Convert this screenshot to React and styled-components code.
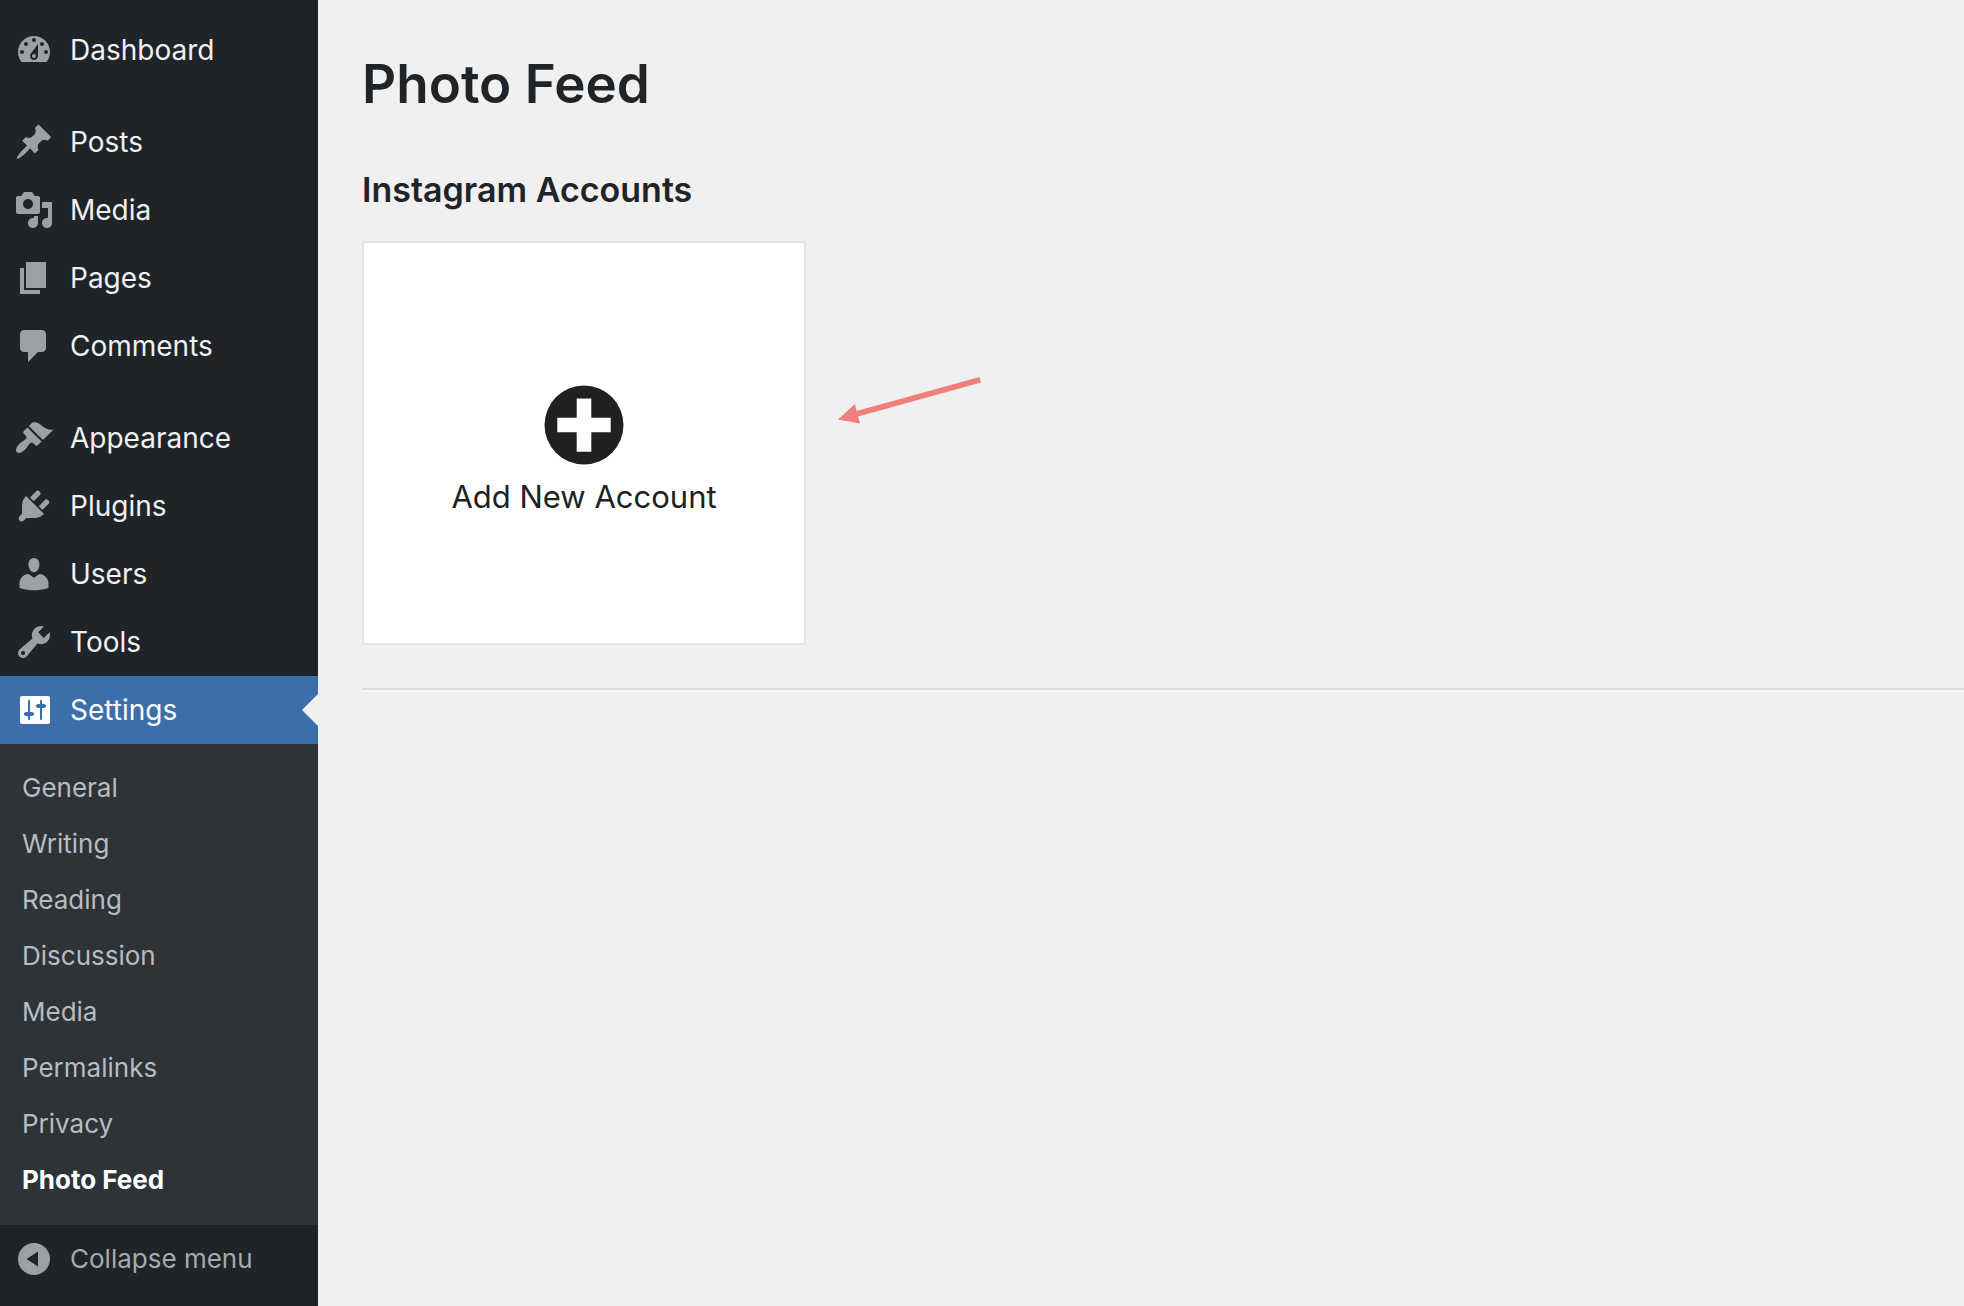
import React from "react";
import styled, { createGlobalStyle, css } from "styled-components";

const color = {
  page: "#f0f0f0",
  sidebar: "#1f2428",
  submenu: "#2e3338",
  active: "#3c6eab",
  icon: "#9ca1a6",
  menuText: "#f0f0f1",
  subText: "#b8bcc0",
  muted: "#a7aaad",
  heading: "#1f2428",
  ink: "#212121",
  arrow: "#ee7f7b",
};

const GlobalStyle = createGlobalStyle`
  *, *::before, *::after { box-sizing: border-box; }
  body {
    margin: 0;
    background: ${color.page};
    font-family: Inter, "Liberation Sans", sans-serif;
  }
`;

const Layout = styled.div`
  display: flex;
  align-items: stretch;
  min-height: 100vh;
`;

const Sidebar = styled.nav`
  flex: 0 0 318px;
  padding-top: 16px;
  background: ${color.sidebar};
`;

const MenuList = styled.ul`
  margin: 0;
  padding: 0;
  list-style: none;
`;

const MenuItem = styled.li`
  margin-top: ${(p) => (p.$separated ? "24px" : "0")};
`;

const rowStyle = css`
  position: relative;
  display: flex;
  align-items: center;
  gap: 16px;
  width: 100%;
  height: 68px;
  padding: 0 14px;
  text-decoration: none;
`;

const MenuLink = styled.a`
  ${rowStyle}
  font-size: 28px;
  line-height: 36px;
  color: ${(p) => (p.$active ? "#fff" : color.menuText)};
  background: ${(p) => (p.$active ? color.active : "transparent")};

  ${(p) =>
    p.$active &&
    css`
      &::after {
        content: "";
        position: absolute;
        top: 50%;
        right: 0;
        margin-top: -16px;
        border: 16px solid transparent;
        border-left-width: 0;
        border-right-color: ${color.page};
      }
    `}
`;

const MenuIcon = styled.svg`
  flex: none;
  width: 40px;
  height: 40px;
  fill: ${(p) => (p.$active ? "#fff" : color.icon)};
`;

const SubMenu = styled.ul`
  margin: 0;
  padding: 16px 0 17px;
  list-style: none;
  background: ${color.submenu};
`;

const SubLink = styled.a`
  display: block;
  padding: 10px 22px;
  font-size: 26px;
  line-height: 36px;
  font-weight: ${(p) => (p.$current ? 700 : 400)};
  color: ${(p) => (p.$current ? "#fff" : color.subText)};
  text-decoration: none;
`;

const CollapseButton = styled.button`
  ${rowStyle}
  border: 0;
  background: none;
  font: inherit;
  font-size: 26px;
  line-height: 36px;
  text-align: left;
  color: ${color.muted};
  cursor: pointer;
`;

const Main = styled.main`
  flex: 1;
  min-width: 0;
  padding: 48px 0 40px 44px;
`;

const PageTitle = styled.h1`
  margin: 0;
  font-size: 53px;
  line-height: 72px;
  font-weight: 600;
  color: ${color.heading};
`;

const SectionTitle = styled.h2`
  margin: 46px 0 27px;
  font-size: 34px;
  line-height: 48px;
  font-weight: 600;
  color: ${color.heading};
`;

const Accounts = styled.div`
  display: flex;
  align-items: flex-start;
  gap: 32px;
`;

const AddCard = styled.button`
  display: flex;
  flex-direction: column;
  align-items: center;
  justify-content: center;
  gap: 12px;
  width: 444px;
  height: 404px;
  padding: 16px 0 0;
  border: 2px solid #e5e5e5;
  background: #fff;
  font: inherit;
  font-size: 31px;
  line-height: 40px;
  color: ${color.ink};
  cursor: pointer;
`;

const PlusIcon = styled.svg`
  width: 80px;
  height: 80px;
  fill: ${color.ink};
`;

const Pointer = styled.svg`
  width: 146px;
  height: 48px;
  margin-top: 136px;
  fill: ${color.arrow};
`;

const Divider = styled.hr`
  margin: 43px 0 0;
  border: 0;
  border-top: 2px solid #dcdcde;
  border-bottom: 2px solid #f6f7f7;
`;

const menu = [
  {
    label: "Dashboard",
    path: "M3.76 16h12.48c1.1-1.37 1.76-3.11 1.76-5 0-4.42-3.58-8-8-8s-8 3.58-8 8c0 1.89.66 3.63 1.76 5zM10 4c.55 0 1 .45 1 1s-.45 1-1 1-1-.45-1-1 .45-1 1-1zM6 6c.55 0 1 .45 1 1s-.45 1-1 1-1-.45-1-1 .45-1 1-1zm8 0c.55 0 1 .45 1 1s-.45 1-1 1-1-.45-1-1 .45-1 1-1zm-5.37 5.55L12 7v6c0 1.1-.9 2-2 2s-2-.9-2-2c0-.57.24-1.08.63-1.45zM4 10c.55 0 1 .45 1 1s-.45 1-1 1-1-.45-1-1 .45-1 1-1zm12 0c.55 0 1 .45 1 1s-.45 1-1 1-1-.45-1-1 .45-1 1-1zm-5 3c0-.55-.45-1-1-1s-1 .45-1 1 .45 1 1 1 1-.45 1-1z",
  },
  {
    label: "Posts",
    separated: true,
    path: "M10.44 3.02l1.82-1.82 6.36 6.35-1.83 1.82c-1.05-.68-2.48-.57-3.41.36l-.75.75c-.92.93-1.04 2.35-.35 3.41l-1.83 1.82-2.41-2.41-2.8 2.79c-.42.42-3.38 2.71-3.8 2.29s1.86-3.39 2.28-3.81l2.79-2.79L4.1 9.36l1.83-1.82c1.05.69 2.48.57 3.4-.36l.75-.75c.93-.92 1.05-2.35.36-3.41z",
  },
  {
    label: "Media",
    path: "M13 11V4c0-.55-.45-1-1-1h-1.67L9 1H5L3.67 3H2c-.55 0-1 .45-1 1v7c0 .55.45 1 1 1h10c.55 0 1-.45 1-1zM7 4.5c1.38 0 2.5 1.12 2.5 2.5S8.38 9.5 7 9.5 4.5 8.38 4.5 7 5.62 4.5 7 4.5zM14 6h5v10.5c0 1.38-1.12 2.5-2.5 2.5S14 17.88 14 16.5s1.12-2.5 2.5-2.5c.17 0 .34.02.5.05V9h-3V6zm-4 8.05V13h2v3.5c0 1.38-1.12 2.5-2.5 2.5S7 17.88 7 16.5 8.12 14 9.5 14c.17 0 .34.02.5.05z",
  },
  { label: "Pages", path: "M6 15V2h10v13H6zm-1 1h8v2H3V5h2v11z" },
  {
    label: "Comments",
    path: "M5 2h9c1.1 0 2 .9 2 2v7c0 1.1-.9 2-2 2h-2l-5 5v-5H5c-1.1 0-2-.9-2-2V4c0-1.1.9-2 2-2z",
  },
  {
    label: "Appearance",
    separated: true,
    path: "M14.48 11.06L7.41 3.99l1.5-1.5c.5-.56 2.3-.47 3.51.32 1.21.8 1.43 1.28 2.91 2.1 1.18.64 2.45 1.26 4.45.85zm-.71.71L6.7 4.7 4.93 6.47c-.39.39-.39 1.02 0 1.41l1.06 1.06c.39.39.39 1.03 0 1.42-.6.6-1.43 1.11-2.21 1.69-.35.26-.7.53-1.01.84C1.43 14.23.4 16.08 1.4 17.07c.99 1 2.84-.03 4.18-1.36.31-.31.58-.66.85-1.02.57-.78 1.08-1.61 1.69-2.21.39-.39 1.02-.39 1.41 0l1.06 1.06c.39.39 1.02.39 1.41 0z",
  },
  {
    label: "Plugins",
    path: "M13.11 4.36L9.87 7.6 8 5.73l3.24-3.24c.35-.34 1.05-.2 1.56.32.52.51.66 1.21.31 1.55zm-8 1.77l.91-1.12 9.01 9.01-1.19.84c-.71.71-2.63 1.16-3.82 1.16H6.14L4.9 17.26c-.59.59-1.54.59-2.12 0-.59-.58-.59-1.53 0-2.12l1.24-1.24v-3.88c0-1.13.4-3.19 1.09-3.89zm7.26 3.97l3.24-3.24c.34-.35 1.04-.21 1.55.31.52.51.66 1.21.31 1.55l-3.24 3.25z",
  },
  {
    label: "Users",
    path: "M10 9.25c-2.27 0-2.73-3.44-2.73-3.44C7 4.02 7.82 2 9.97 2c2.16 0 2.98 2.02 2.71 3.81 0 0-.41 3.44-2.68 3.44zm0 2.57L12.72 10c2.39 0 4.52 2.33 4.52 4.53v2.49s-3.65 1.13-7.24 1.13c-3.65 0-7.24-1.13-7.24-1.13v-2.49c0-2.25 1.94-4.48 4.47-4.48z",
  },
  {
    label: "Tools",
    path: "M16.68 9.77c-1.34 1.34-3.3 1.67-4.95.99l-5.41 6.52c-.99.99-2.59.99-3.58 0s-.99-2.59 0-3.57l6.52-5.42c-.68-1.65-.35-3.61.99-4.95 1.28-1.28 3.12-1.62 4.72-1.06l-2.89 2.89 2.82 2.82 2.86-2.87c.53 1.58.18 3.39-1.08 4.65zM3.81 16.21c.4.39 1.04.39 1.43 0 .4-.4.4-1.04 0-1.43-.39-.4-1.03-.4-1.43 0-.39.39-.39 1.03 0 1.43z",
  },
  {
    label: "Settings",
    active: true,
    path: "M18 16V4c0-.55-.45-1-1-1H4c-.55 0-1 .45-1 1v12c0 .55.45 1 1 1h13c.55 0 1-.45 1-1zM8 11h1c.55 0 1 .45 1 1s-.45 1-1 1H8v1.5c0 .28-.22.5-.5.5s-.5-.22-.5-.5V13H6c-.55 0-1-.45-1-1s.45-1 1-1h1V5.5c0-.28.22-.5.5-.5s.5.22.5.5V11zm5-2h-1c-.55 0-1-.45-1-1s.45-1 1-1h1V5.5c0-.28.22-.5.5-.5s.5.22.5.5V7h1c.55 0 1 .45 1 1s-.45 1-1 1h-1v5.5c0 .28-.22.5-.5.5s-.5-.22-.5-.5V9z",
    children: [
      "General",
      "Writing",
      "Reading",
      "Discussion",
      "Media",
      "Permalinks",
      "Privacy",
      "Photo Feed",
    ],
  },
];

const currentPage = "Photo Feed";

export default function App() {
  return (
    <>
      <GlobalStyle />
      <Layout>
        <Sidebar aria-label="Main menu">
          <MenuList>
            {menu.map((item) => (
              <MenuItem key={item.label} $separated={item.separated}>
                <MenuLink href="#" $active={item.active}>
                  <MenuIcon viewBox="0 0 20 20" aria-hidden="true" $active={item.active}>
                    <path fillRule="evenodd" d={item.path} />
                  </MenuIcon>
                  {item.label}
                </MenuLink>
                {item.children && (
                  <SubMenu>
                    {item.children.map((label) => (
                      <li key={label}>
                        <SubLink
                          href="#"
                          $current={label === currentPage}
                          aria-current={label === currentPage ? "page" : undefined}
                        >
                          {label}
                        </SubLink>
                      </li>
                    ))}
                  </SubMenu>
                )}
              </MenuItem>
            ))}
          </MenuList>
          <CollapseButton type="button">
            <MenuIcon viewBox="0 0 20 20" aria-hidden="true">
              <path fillRule="evenodd" d="M10 2a8 8 0 1 0 0 16 8 8 0 0 0 0-16zM12 6.2v7.6L6.3 10z" />
            </MenuIcon>
            Collapse menu
          </CollapseButton>
        </Sidebar>
        <Main>
          <PageTitle>Photo Feed</PageTitle>
          <SectionTitle>Instagram Accounts</SectionTitle>
          <Accounts>
            <AddCard type="button">
              <PlusIcon viewBox="0 0 80 80" aria-hidden="true">
                <path
                  fillRule="evenodd"
                  d="M40 0.5a39.5 39.5 0 1 0 0 79 39.5 39.5 0 0 0 0-79zM32.7 13.5h14.6v19.2h19.4v14.6H47.3v19.4H32.7V47.3H13.3V32.7h19.4z"
                />
              </PlusIcon>
              Add New Account
            </AddCard>
            <Pointer viewBox="0 0 146 48" aria-hidden="true">
              <path d="M0 42.500L17 27l1.500 7L141.500 0l1.500 5.500L20 39.500l2 7z" />
            </Pointer>
          </Accounts>
          <Divider />
        </Main>
      </Layout>
    </>
  );
}
